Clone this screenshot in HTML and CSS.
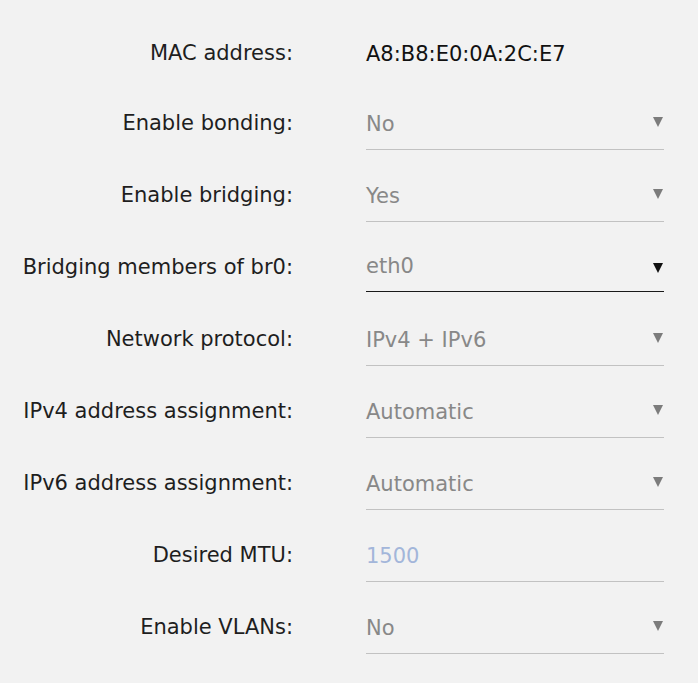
FILE: index.html
```html
<!DOCTYPE html>
<html lang="en">
<head>
  <meta charset="UTF-8">
  <meta name="viewport" content="width=device-width, initial-scale=1">
  <title>Network settings</title>
  <link rel="stylesheet" href="styles.css">
</head>
<body>
  <form class="settings">
    <div class="row">
      <label class="label">MAC address:</label>
      <div class="value">A8:B8:E0:0A:2C:E7</div>
    </div>

    <div class="row">
      <label class="label">Enable bonding:</label>
      <div class="field select">No</div>
    </div>

    <div class="row">
      <label class="label">Enable bridging:</label>
      <div class="field select">Yes</div>
    </div>

    <div class="row">
      <label class="label">Bridging members of br0:</label>
      <div class="field select active">eth0</div>
    </div>

    <div class="row">
      <label class="label">Network protocol:</label>
      <div class="field select">IPv4 + IPv6</div>
    </div>

    <div class="row">
      <label class="label">IPv4 address assignment:</label>
      <div class="field select">Automatic</div>
    </div>

    <div class="row">
      <label class="label">IPv6 address assignment:</label>
      <div class="field select">Automatic</div>
    </div>

    <div class="row">
      <label class="label">Desired MTU:</label>
      <div class="field input placeholder">1500</div>
    </div>

    <div class="row">
      <label class="label">Enable VLANs:</label>
      <div class="field select">No</div>
    </div>
  </form>
</body>
</html>
```

FILE: styles.css
```css
html, body {
  margin: 0;
  padding: 0;
  background-color: #f2f2f2;
  color: #1e1e1e;
  font-family: 'DejaVu Sans', Verdana, sans-serif;
  font-size: 21px;
}

.settings {
  padding-top: 30px;
}

.row {
  display: grid;
  grid-template-columns: 293px 298px;
  column-gap: 73px;
  align-items: start;
  height: 72px;
}

.row:first-child {
  height: 70px;
}

.label {
  text-align: right;
  line-height: 47px;
  white-space: nowrap;
}

.value {
  line-height: 49px;
  color: #111;
}

.field {
  position: relative;
  box-sizing: border-box;
  height: 50px;
  line-height: 49px;
  color: #888;
  border-bottom: 1px solid #c2c2c2;
}

.placeholder {
  color: #a3b6da;
}

/* dropdown arrow */
.select::after {
  content: '';
  position: absolute;
  right: 1px;
  top: 17px;
  border-left: 5px solid transparent;
  border-right: 5px solid transparent;
  border-top: 10px solid #7c7c7c;
}

/* focused select: dark line, dark arrow */
.active {
  height: 48px;
  line-height: 45px;
  border-bottom-color: #1a1a1a;
}

.active::after {
  top: 19px;
  border-top-color: #111;
}
```
